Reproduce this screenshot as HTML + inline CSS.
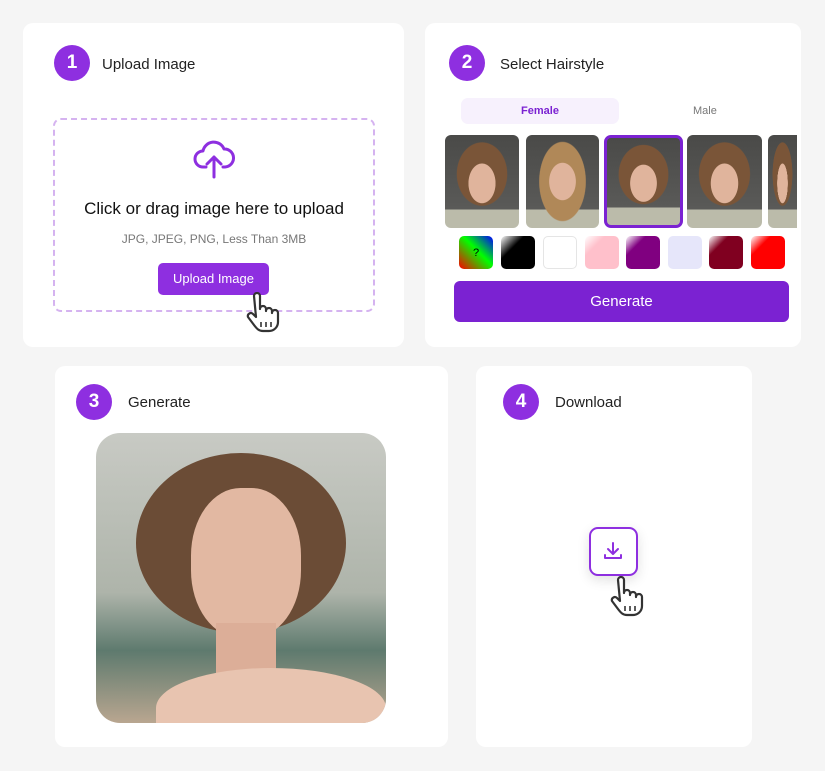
<!DOCTYPE html>
<html><head><style>
body{margin:0;width:825px;height:771px;background:#f5f5f5;font-family:"Liberation Sans",sans-serif;position:relative;overflow:hidden}
.c{position:absolute;background:#fff;border-radius:10px}
.n{position:absolute;width:36px;height:36px;border-radius:50%;background:#8e2fe0;color:#fff;font-size:19px;font-weight:bold;text-align:center;line-height:36px}
.t{position:absolute;font-size:15px;color:#222}
.a{position:absolute}
.th{position:absolute;top:135px;height:93px;border-radius:6px;background:radial-gradient(ellipse 30% 35% at 50% 52%,#e0b49c 60%,transparent 62%),radial-gradient(ellipse 48% 48% at 50% 42%,#7a5538 70%,transparent 72%),linear-gradient(#4a4a48,#5a5a58 80%,#bba 80%)}
.sw{position:absolute;top:236px;width:34px;height:33px;border-radius:5px}
</style></head><body>
<div class="c" style="left:23px;top:23px;width:381px;height:324px"></div>
<div class="c" style="left:425px;top:23px;width:376px;height:324px;overflow:hidden"></div>
<div class="c" style="left:55px;top:366px;width:393px;height:381px"></div>
<div class="c" style="left:476px;top:366px;width:276px;height:381px"></div>

<div class="n" style="left:54px;top:45px">1</div><div class="t" style="left:102px;top:56px">Upload Image</div>
<div class="n" style="left:449px;top:45px">2</div><div class="t" style="left:500px;top:56px">Select Hairstyle</div>
<div class="n" style="left:76px;top:384px">3</div><div class="t" style="left:128px;top:394px">Generate</div>
<div class="n" style="left:503px;top:384px">4</div><div class="t" style="left:555px;top:394px">Download</div>

<div class="a" style="left:53px;top:118px;width:318px;height:190px;border:2px dashed #d5b3f0;border-radius:8px"></div>
<svg class="a" style="left:193px;top:137px" width="42" height="42" viewBox="0 0 42 42" fill="none" stroke="#8e2fe0" stroke-width="3" stroke-linecap="round" stroke-linejoin="round"><path d="M13 30H10a8 8 0 0 1 0-16 11 11 0 0 1 21-2 8 8 0 0 1 1 18h-2"/><path d="M21 40V20M14 27l7-7 7 7"/></svg>
<div class="a" style="left:53px;top:199px;width:322px;text-align:center;font-size:17px;color:#111">Click or drag image here to upload</div>
<div class="a" style="left:53px;top:232px;width:322px;text-align:center;font-size:12px;color:#777">JPG, JPEG, PNG, Less Than 3MB</div>
<div class="a" style="left:158px;top:263px;width:111px;height:32px;background:#8e2fe0;border-radius:5px;color:#fff;font-size:13px;text-align:center;line-height:32px">Upload Image</div>
<svg class="a" style="left:242px;top:292px" width="42" height="42" viewBox="0 0 42 42" fill="#fff" stroke="#333" stroke-width="2.2" stroke-linejoin="round"><path d="M12 4a3 3 0 0 1 6 0v13a3 3 0 0 1 6 0v2a3 3 0 0 1 6 0v2a3 3 0 0 1 6 0v9c0 5-4 9-9 9h-6c-4 0-6-2-9-6l-6-8a3 3 0 0 1 5-3l3 3z"/><path d="M19 30v5M24 30v5M29 30v5" stroke-width="1.6"/></svg>

<div class="a" style="left:461px;top:98px;width:158px;height:26px;background:#f7f1fd;border-radius:7px;text-align:center;line-height:26px;font-size:11px;color:#7b22d2;font-weight:bold">Female</div>
<div class="a" style="left:693px;top:105px;font-size:11px;color:#777">Male</div>
<div class="th" style="left:445px;width:74px"></div>
<div class="th" style="left:526px;width:73px;background:radial-gradient(ellipse 30% 33% at 50% 50%,#e0b49c 60%,transparent 62%),radial-gradient(ellipse 45% 60% at 50% 50%,#b08858 70%,transparent 72%),linear-gradient(#4a4a48,#5a5a58 80%,#bba 80%)"></div>
<div class="th" style="left:604px;width:73px;height:87px;border:3px solid #7b22d2;border-radius:7px"></div>
<div class="th" style="left:687px;width:75px"></div>
<div class="th" style="left:768px;width:29px;border-radius:6px 0 0 6px"></div>
<div class="sw" style="left:459px;background:linear-gradient(225deg,#00f,#0f0 45%,#f00)"><div style="text-align:center;font-size:11px;margin-top:11px">?</div></div>
<div class="sw" style="left:501px;background:linear-gradient(315deg,#000 65%,#fff)"></div>
<div class="sw" style="left:543px;background:#fff;border:1px solid #e5e5e5;width:32px;height:31px"></div>
<div class="sw" style="left:585px;background:linear-gradient(315deg,#ffc0cb 70%,#fff)"></div>
<div class="sw" style="left:626px;background:linear-gradient(315deg,#800080 70%,#fff)"></div>
<div class="sw" style="left:668px;background:#e6e6fa"></div>
<div class="sw" style="left:709px;background:linear-gradient(315deg,#800020 70%,#fff)"></div>
<div class="sw" style="left:751px;background:linear-gradient(315deg,#f00 70%,#fff)"></div>
<div class="a" style="left:454px;top:281px;width:335px;height:41px;background:#7b22d2;border-radius:6px;color:#fff;font-size:15px;text-align:center;line-height:41px">Generate</div>

<div class="a" style="left:96px;top:433px;width:290px;height:290px;border-radius:24px;overflow:hidden;background:linear-gradient(#c8cac4 0,#aeb4aa 55%,#5e7a6e 75%,#b9a690 100%)">
<div class="a" style="left:40px;top:20px;width:210px;height:180px;border-radius:50%;background:#6b4c36"></div>
<div class="a" style="left:95px;top:55px;width:110px;height:150px;border-radius:45%;background:#e2b8a2"></div>
<div class="a" style="left:120px;top:190px;width:60px;height:60px;background:#dcae98"></div>
<div class="a" style="left:60px;top:235px;width:230px;height:80px;border-radius:50% 50% 0 0;background:#e8c4b0"></div>
</div>

<div class="a" style="left:589px;top:527px;width:45px;height:45px;border:2px solid #8e2fe0;border-radius:9px;background:#fff;box-shadow:0 4px 12px rgba(0,0,0,.12)"></div>
<svg class="a" style="left:601px;top:539px" width="24" height="24" viewBox="0 0 24 24" fill="none" stroke="#8e2fe0" stroke-width="2" stroke-linecap="round" stroke-linejoin="round"><path d="M12 4v11M7 10l5 5 5-5M4 16v3h16v-3"/></svg>
<svg class="a" style="left:606px;top:576px" width="42" height="42" viewBox="0 0 42 42" fill="#fff" stroke="#333" stroke-width="2.2" stroke-linejoin="round"><path d="M12 4a3 3 0 0 1 6 0v13a3 3 0 0 1 6 0v2a3 3 0 0 1 6 0v2a3 3 0 0 1 6 0v9c0 5-4 9-9 9h-6c-4 0-6-2-9-6l-6-8a3 3 0 0 1 5-3l3 3z"/><path d="M19 30v5M24 30v5M29 30v5" stroke-width="1.6"/></svg>
</body></html>
